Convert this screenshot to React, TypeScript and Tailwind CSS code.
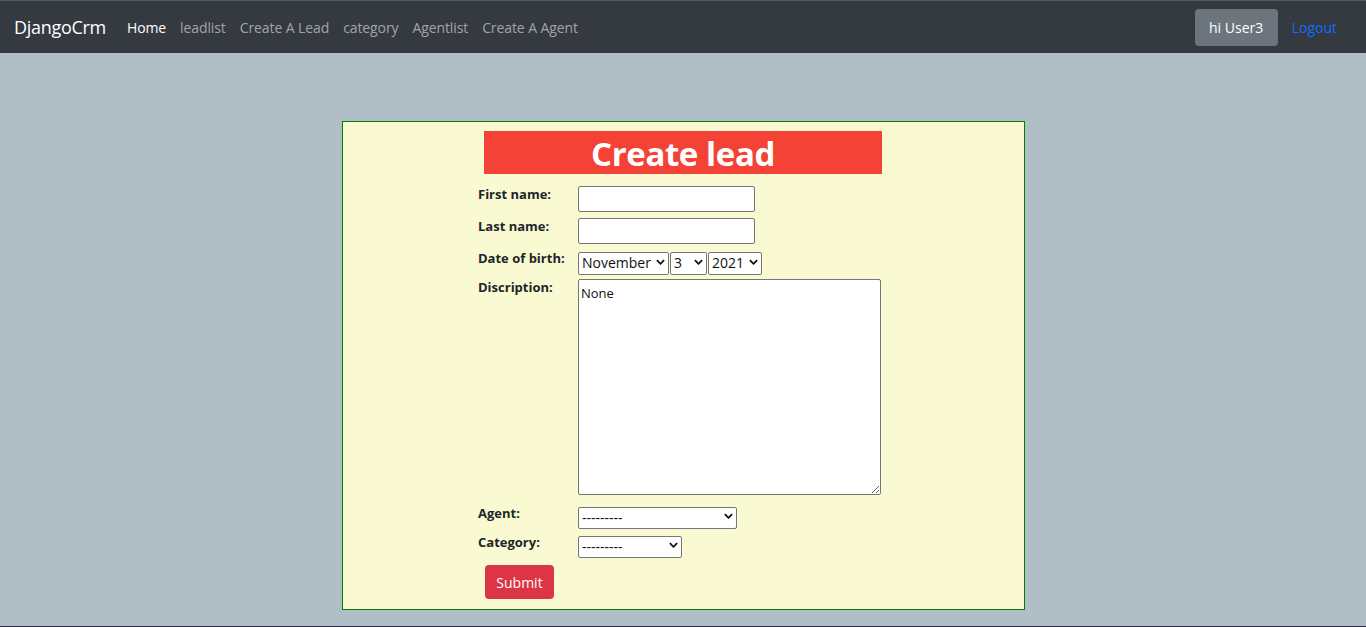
import { ReactNode } from 'react'

const navLinks = ['leadlist', 'Create A Lead', 'category', 'Agentlist', 'Create A Agent']

function Chevron() {
  return (
    <svg
      viewBox="0 0 10 6"
      className="pointer-events-none absolute right-[4px] top-1/2 h-[6px] w-[9px] -translate-y-1/2"
    >
      <path d="M1 1l4 4 4-4" fill="none" stroke="#111" strokeWidth="2" />
    </svg>
  )
}

function Select({ value, width, height = 'h-[23px]' }: { value: string; width: string; height?: string }) {
  return (
    <div className={`relative ${width} ${height}`}>
      <select
        defaultValue={value}
        className="h-full w-full appearance-none rounded-[2px] border border-[#767676] bg-white pl-[3px] text-[14px] leading-none text-[#111]"
      >
        <option>{value}</option>
      </select>
      <Chevron />
    </div>
  )
}

function Row({ label, children, className = '' }: { label: string; children: ReactNode; className?: string }) {
  return (
    <div className={`flex ${className}`}>
      <div className="w-[100px] shrink-0 pt-[1px] text-[13px] font-bold leading-[14px] text-[#212529]">{label}</div>
      <div>{children}</div>
    </div>
  )
}

export default function App() {
  return (
    <div className="flex h-[627px] flex-col bg-[#b0bec5] font-['Open_Sans',sans-serif]">
      <nav className="flex h-[53px] items-center border-t border-[#555a60] bg-[#343a40] pl-[14px] pr-[29px]">
        <span className="text-[18px] tracking-[-0.3px] text-white">DjangoCrm</span>
        <div className="ml-[21px] flex gap-[14px] text-[14px] tracking-[-0.1px]">
          <span className="text-white">Home</span>
          {navLinks.map((l) => (
            <span key={l} className="text-[rgba(255,255,255,0.55)]">
              {l}
            </span>
          ))}
        </div>
        <div className="ml-auto flex items-center">
          <button className="h-[37px] w-[83px] rounded-[4px] bg-[#6c757d] text-[14px] text-white">hi User3</button>
          <span className="ml-[14px] text-[14px] text-[#0d6efd]">Logout</span>
        </div>
      </nav>

      <div className="flex flex-1 justify-center pt-[68px]">
        <div className="ml-[1px] h-[489px] w-[683px] border border-[#008000] bg-[#fafad2] pt-[9px]">
          <div className="ml-[141px] flex h-[43px] w-[398px] items-center justify-center bg-[#f44336]">
            <h1 className="pt-[2px] text-[33px] font-bold leading-none tracking-[-0.4px] text-white">Create lead</h1>
          </div>

          <div className="mx-auto mt-[12px] flex w-[411px] flex-col">
            <Row label="First name:">
              <input className="h-[26px] w-[177px] rounded-[2px] border border-[#767676] bg-white" />
            </Row>
            <Row label="Last name:" className="mt-[6px]">
              <input className="h-[26px] w-[177px] rounded-[2px] border border-[#767676] bg-white" />
            </Row>
            <Row label="Date of birth:" className="mt-[6px]">
              <div className="flex gap-[1px]">
                <Select value="November" width="w-[91px]" />
                <Select value="3" width="w-[37px]" />
                <Select value="2021" width="w-[54px]" />
              </div>
            </Row>
            <Row label="Discription:" className="mt-[6px]">
              <textarea
                defaultValue="None"
                className="block h-[216px] w-[303px] rounded-[2px] border border-[#767676] bg-white px-[2px] pt-[4px] text-[13px] text-[#111]"
              />
            </Row>
            <Row label="Agent:" className="mt-[10px]">
              <Select value="---------" width="w-[159px]" height="h-[22px]" />
            </Row>
            <Row label="Category:" className="mt-[7px]">
              <Select value="---------" width="w-[104px]" height="h-[22px]" />
            </Row>
            <div className="mt-[9px] pl-[7px]">
              <button className="h-[34px] w-[69px] rounded-[4px] bg-[#dc3545] text-[14px] text-white">Submit</button>
            </div>
          </div>
        </div>
      </div>
      <div className="h-[1px] bg-[#2a2b45]" />
    </div>
  )
}
